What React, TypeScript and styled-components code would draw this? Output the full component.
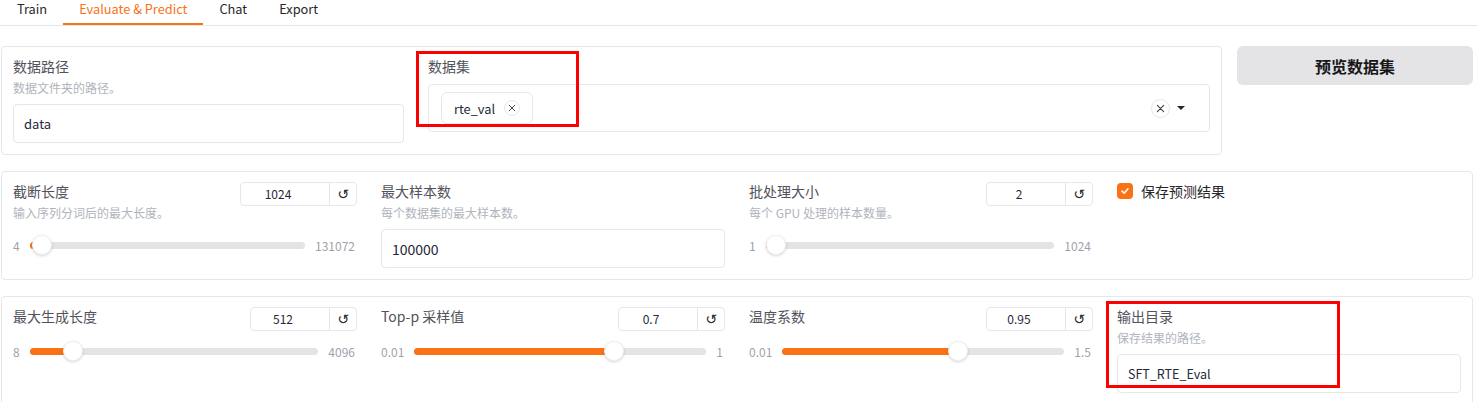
import React from "react";
import styled, { createGlobalStyle } from "styled-components";

const Global = createGlobalStyle`
  html, body { margin: 0; padding: 0; background: #ffffff; }
  body { font-family: "Noto Sans CJK SC", "Noto Sans", sans-serif; }
  * { box-sizing: border-box; }
`;

const Page = styled.div`
  position: relative;
  width: 1477px;
  height: 402px;
  overflow: hidden;
`;

const TabBar = styled.div`
  display: flex;
  height: 26px;
  padding-left: 1px;
  border-bottom: 1px solid #e5e7eb;
`;

const Tab = styled.div<{ $active?: boolean }>`
  height: 25px;
  padding: 0 16px;
  font-size: 12.8px;
  line-height: 18px;
  color: ${(p) => (p.$active ? "#f97316" : "#27272a")};
  border-bottom: 2px solid ${(p) => (p.$active ? "#f97316" : "transparent")};
`;

const Content = styled.div`
  display: flex;
  flex-direction: column;
  gap: 16px;
  width: 1472px;
  margin: 20px 0 0 1px;
`;

const TopRow = styled.div`
  display: grid;
  grid-template-columns: 1fr 236px;
  gap: 15px;
  align-items: start;
`;

const Panel = styled.div<{ $cols: string }>`
  display: grid;
  grid-template-columns: ${(p) => p.$cols};
  gap: 24px;
  padding: 10px 11px 11px;
  border: 1px solid #e5e7eb;
  border-radius: 4px;
  background: #fff;
`;

const Field = styled.div`
  display: flex;
  flex-direction: column;
  min-width: 0;
`;

const Label = styled.div`
  font-size: 14px;
  line-height: 18px;
  color: #52525b;
  white-space: nowrap;
`;

const Desc = styled.div`
  margin-top: 5px;
  font-size: 12px;
  line-height: 16px;
  color: #b0b4bc;
  white-space: nowrap;
`;

const TextInput = styled.div<{ $fs?: number }>`
  margin-top: 8px;
  height: 39px;
  padding: 0 10px;
  display: flex;
  align-items: center;
  border: 1px solid #e5e7eb;
  border-radius: 4px;
  font-size: ${(p) => p.$fs ?? 14}px;
  color: #1f2937;
`;

const Select = styled.div`
  margin-top: 9px;
  height: 48px;
  display: flex;
  align-items: center;
  padding: 0 24px 0 12px;
  border: 1px solid #e5e7eb;
  border-radius: 4px;
`;

const Tag = styled.div`
  height: 32px;
  display: flex;
  align-items: center;
  gap: 9px;
  padding: 0 12px;
  border: 1px solid #e5e7eb;
  border-radius: 6px;
  font-size: 12.8px;
  color: #1f2937;
`;

const CircleX = styled.span<{ $size: number }>`
  width: ${(p) => p.$size}px;
  height: ${(p) => p.$size}px;
  border: 1px solid #e5e7eb;
  border-radius: 50%;
  display: inline-flex;
  align-items: center;
  justify-content: center;
  color: #3f3f46;
`;

const SelectIcons = styled.div`
  margin-left: auto;
  display: flex;
  align-items: center;
  gap: 7px;
`;

const Caret = styled.span`
  width: 0;
  height: 0;
  border-left: 4px solid transparent;
  border-right: 4px solid transparent;
  border-top: 4px solid #27272a;
`;

const PreviewButton = styled.button`
  height: 39px;
  border: none;
  border-radius: 6px;
  background: #e4e4e7;
  font-family: inherit;
  font-size: 16px;
  font-weight: 700;
  color: #18181b;
  padding: 0;
`;

const Header = styled.div`
  display: flex;
  justify-content: space-between;
  align-items: flex-start;
`;

const NumBox = styled.div<{ $w: number }>`
  width: ${(p) => p.$w}px;
  height: 24px;
  display: flex;
  border: 1px solid #e5e7eb;
  border-radius: 4px;
  flex-shrink: 0;
`;

const NumValue = styled.div`
  flex: 1;
  text-align: center;
  padding-right: 14px;
  font-size: 12px;
  line-height: 22px;
  color: #1f2937;
`;

const ResetBtn = styled.div`
  width: 27px;
  border-left: 1px solid #e5e7eb;
  display: flex;
  align-items: center;
  justify-content: center;
  font-family: "DejaVu Sans", sans-serif;
  font-size: 14px;
  color: #27272a;
`;

const SliderRow = styled.div<{ $mt: number }>`
  margin-top: ${(p) => p.$mt}px;
  height: 20px;
  display: flex;
  align-items: center;
  gap: 10px;
  padding-right: 2px;
`;

const RangeLabel = styled.span`
  font-size: 12px;
  color: #a1a1aa;
`;

const Track = styled.div`
  position: relative;
  flex: 1;
  height: 7px;
  border-radius: 4px;
  background: #e4e4e7;
`;

const Fill = styled.div`
  position: absolute;
  left: 0;
  top: 0;
  bottom: 0;
  border-radius: 4px;
  background: #f97316;
`;

const Thumb = styled.div`
  position: absolute;
  top: 50%;
  width: 20px;
  height: 20px;
  margin: -10px 0 0 -10px;
  border-radius: 50%;
  background: #ffffff;
  border: 1px solid #f1f1f3;
  box-shadow: 0 1px 3px rgba(0, 0, 0, 0.18);
`;

const CheckRow = styled.div`
  display: flex;
  align-items: center;
  gap: 8px;
  height: 18px;
`;

const CheckBox = styled.span`
  width: 16px;
  height: 16px;
  border-radius: 4px;
  background: #f97316;
  display: inline-flex;
  align-items: center;
  justify-content: center;
`;

const CheckLabel = styled.span`
  font-size: 14px;
  line-height: 18px;
  color: #27272a;
`;

const Highlight = styled.div`
  position: absolute;
  border: 3px solid #ff0000;
  pointer-events: none;
`;

const XIcon = ({ s, w = 1.3 }: { s: number; w?: number }) => (
  <svg width={s} height={s} viewBox="0 0 10 10">
    <path d="M1.5 1.5 L8.5 8.5 M8.5 1.5 L1.5 8.5" stroke="currentColor" strokeWidth={w} strokeLinecap="round" />
  </svg>
);

type SliderProps = {
  label: string;
  desc?: string;
  value: number;
  display: string;
  min: number;
  max: number;
  minText: string;
  maxText: string;
  boxW: number;
};

const SliderField = ({ label, desc, value, display, min, max, minText, maxText, boxW }: SliderProps) => {
  const frac = (value - min) / (max - min);
  const pos = `calc(10px + ${frac} * (100% - 20px))`;
  return (
    <Field>
      <Header>
        <div>
          <Label>{label}</Label>
          {desc && <Desc>{desc}</Desc>}
        </div>
        <NumBox $w={boxW}>
          <NumValue>{display}</NumValue>
          <ResetBtn>↺</ResetBtn>
        </NumBox>
      </Header>
      <SliderRow $mt={desc ? 14 : 10}>
        <RangeLabel>{minText}</RangeLabel>
        <Track>
          <Fill style={{ width: pos }} />
          <Thumb style={{ left: pos }} />
        </Track>
        <RangeLabel>{maxText}</RangeLabel>
      </SliderRow>
    </Field>
  );
};

export default function App() {
  return (
    <Page>
      <Global />
      <TabBar>
        <Tab>Train</Tab>
        <Tab $active>Evaluate &amp; Predict</Tab>
        <Tab>Chat</Tab>
        <Tab>Export</Tab>
      </TabBar>
      <Content>
        <TopRow>
          <Panel $cols="1fr 2fr">
            <Field>
              <Label>数据路径</Label>
              <Desc>数据文件夹的路径。</Desc>
              <TextInput $fs={13}>data</TextInput>
            </Field>
            <Field>
              <Label>数据集</Label>
              <Select>
                <Tag>
                  rte_val
                  <CircleX $size={16}>
                    <XIcon s={8} w={1.2} />
                  </CircleX>
                </Tag>
                <SelectIcons>
                  <CircleX $size={19}>
                    <XIcon s={9} w={1.2} />
                  </CircleX>
                  <Caret />
                </SelectIcons>
              </Select>
            </Field>
          </Panel>
          <PreviewButton>预览数据集</PreviewButton>
        </TopRow>

        <Panel $cols="repeat(4, 1fr)">
          <SliderField
            label="截断长度"
            desc="输入序列分词后的最大长度。"
            value={1024}
            display="1024"
            min={4}
            max={131072}
            minText="4"
            maxText="131072"
            boxW={117}
          />
          <Field>
            <Label>最大样本数</Label>
            <Desc>每个数据集的最大样本数。</Desc>
            <TextInput>100000</TextInput>
          </Field>
          <SliderField
            label="批处理大小"
            desc="每个 GPU 处理的样本数量。"
            value={2}
            display="2"
            min={1}
            max={1024}
            minText="1"
            maxText="1024"
            boxW={107}
          />
          <Field>
            <CheckRow>
              <CheckBox>
                <svg width="10" height="10" viewBox="0 0 10 10">
                  <path d="M2 5.2 L4.2 7.2 L8 2.8" fill="none" stroke="#fff" strokeWidth="1.6" strokeLinecap="round" strokeLinejoin="round" />
                </svg>
              </CheckBox>
              <CheckLabel>保存预测结果</CheckLabel>
            </CheckRow>
          </Field>
        </Panel>

        <Panel $cols="repeat(4, 1fr)">
          <SliderField
            label="最大生成长度"
            value={512}
            display="512"
            min={8}
            max={4096}
            minText="8"
            maxText="4096"
            boxW={107}
          />
          <SliderField
            label="Top-p 采样值"
            value={0.7}
            display="0.7"
            min={0.01}
            max={1}
            minText="0.01"
            maxText="1"
            boxW={107}
          />
          <SliderField
            label="温度系数"
            value={0.95}
            display="0.95"
            min={0.01}
            max={1.5}
            minText="0.01"
            maxText="1.5"
            boxW={107}
          />
          <Field>
            <Label>输出目录</Label>
            <Desc>保存结果的路径。</Desc>
            <TextInput $fs={12.5}>SFT_RTE_Eval</TextInput>
          </Field>
        </Panel>
      </Content>
      <Highlight style={{ left: 416, top: 51, width: 163, height: 76 }} />
      <Highlight style={{ left: 1106, top: 301, width: 234, height: 87 }} />
    </Page>
  );
}
